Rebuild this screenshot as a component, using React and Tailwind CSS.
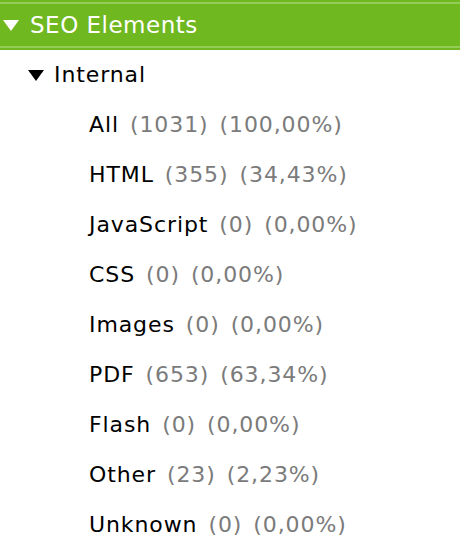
const items = [
  ["All", "(1031)", "(100,00%)"],
  ["HTML", "(355)", "(34,43%)"],
  ["JavaScript", "(0)", "(0,00%)"],
  ["CSS", "(0)", "(0,00%)"],
  ["Images", "(0)", "(0,00%)"],
  ["PDF", "(653)", "(63,34%)"],
  ["Flash", "(0)", "(0,00%)"],
  ["Other", "(23)", "(2,23%)"],
  ["Unknown", "(0)", "(0,00%)"],
];

function Caret({ className }) {
  return (
    <svg width="16" height="11" viewBox="0 0 16 11" className={className}>
      <path d="M0 0 H16 L8 11 Z" fill="currentColor" />
    </svg>
  );
}

export default function App() {
  return (
    <div
      className="h-[552px] w-[460px] overflow-hidden bg-white text-[22px] tracking-[0.9px] text-black"
      style={{ fontFamily: "'DejaVu Sans', sans-serif" }}
    >
      <div className="flex h-[50px] flex-col bg-[#6fb81f]">
        <div className="mt-[2px] h-[2px] bg-[#93cd55]" />
        <div className="flex flex-1 items-center gap-[11px] pl-[3px] text-white">
          <Caret className="text-white" />
          <span className="text-[23px] leading-none tracking-[0.5px]">SEO Elements</span>
        </div>
        <div className="mb-[2px] h-[2px] bg-[#93cd55]" />
      </div>
      <div className="flex h-[50px] items-center gap-[10px] pl-[28px]">
        <Caret className="text-black" />
        <span className="leading-none">Internal</span>
      </div>
      {items.map(([name, count, pct]) => (
        <div key={name} className="flex h-[50px] items-center gap-[11px] pl-[89px] leading-none">
          <span>{name}</span>
          <span className="text-[#7b7b7b]">{count}</span>
          <span className="text-[#7b7b7b]">{pct}</span>
        </div>
      ))}
    </div>
  );
}
